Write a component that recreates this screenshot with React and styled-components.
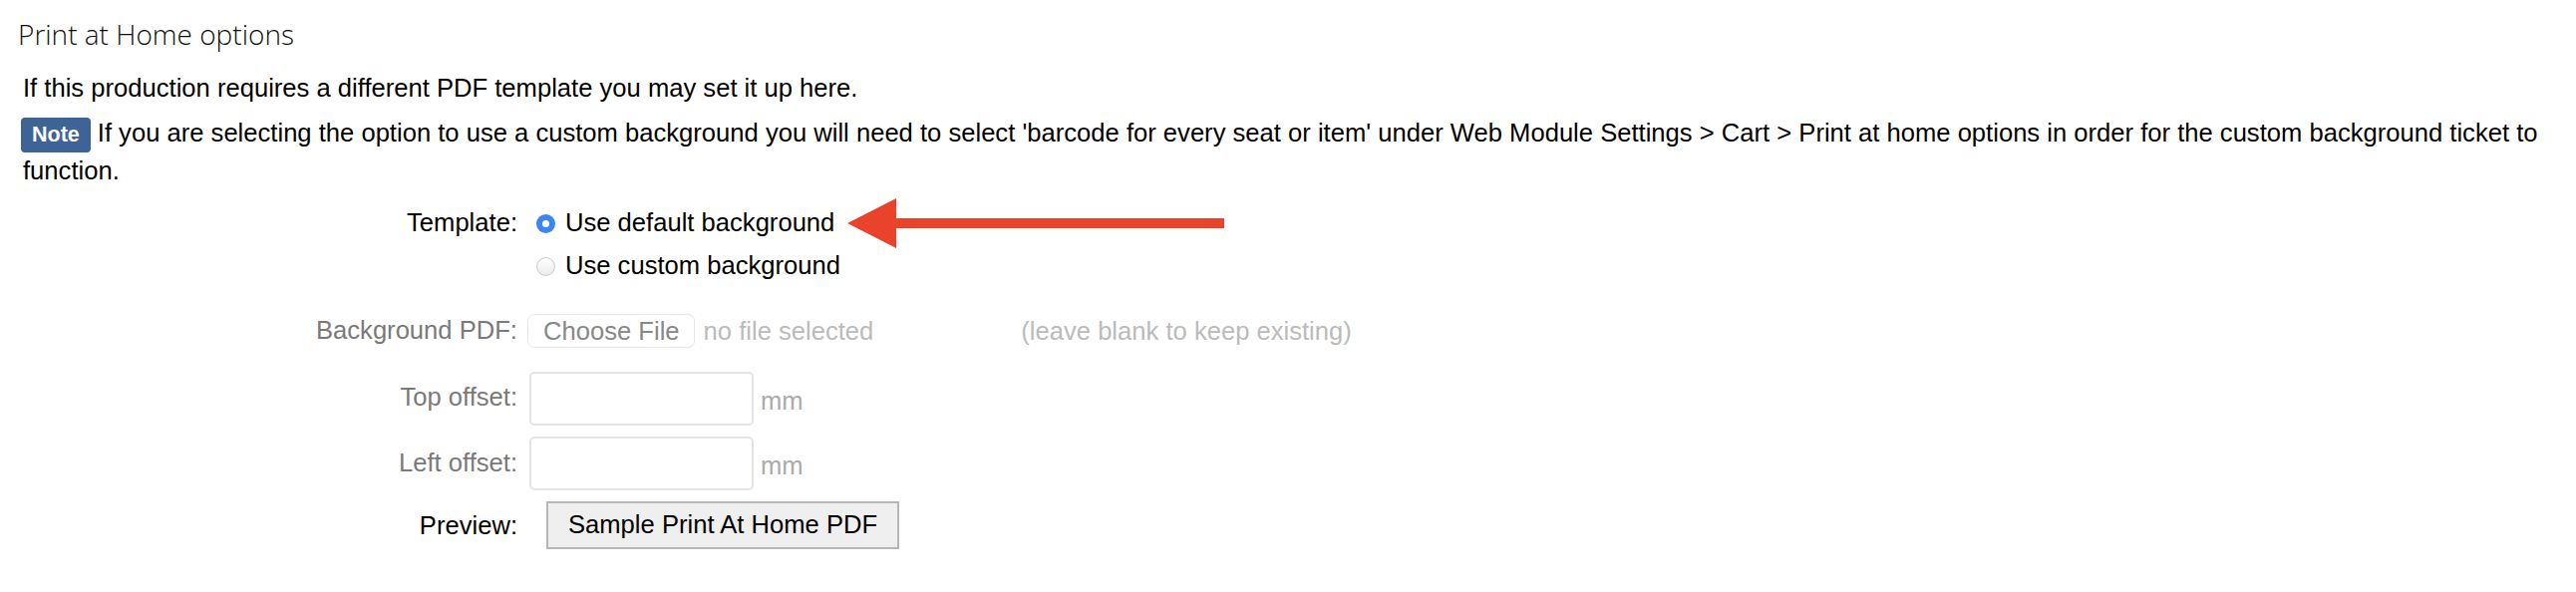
import React from "react";
import styled, { createGlobalStyle } from "styled-components";

const Global = createGlobalStyle`
  html, body { margin: 0; padding: 0; background: #fff; }
  body { font-family: "Liberation Sans", Arial, sans-serif; font-size: 25.6px; color: #000; }
`;

const Page = styled.div`
  position: relative;
  padding: 15px 0 0 17px;
  width: 2584px;
  height: 594px;
  box-sizing: border-box;
`;

const Heading = styled.h2`
  margin: 0;
  font-family: "Open Sans", sans-serif;
  font-weight: 300;
  font-size: 28px;
  line-height: 38px;
  color: #111;
  padding-left: 1px;
`;

const Para = styled.p`
  margin: ${(p) => p.$mt || 0}px 0 0 6px;
  line-height: 36px;
  padding-right: 24px;
`;

const NoteBadge = styled.span`
  display: inline-block;
  background: #3e6397;
  color: #fff;
  font-weight: 700;
  font-size: 21.5px;
  line-height: 25px;
  padding: 5px 11px;
  border-radius: 4px;
  margin-left: -2px;
  margin-right: 7px;
`;

const Form = styled.div`
  display: grid;
  grid-template-columns: 502px auto;
  column-gap: 12px;
  margin-top: 16px;
`;

const Label = styled.div`
  text-align: right;
  line-height: 36px;
  color: ${(p) => (p.$muted ? "#7a7a7a" : "#000")};
  align-self: ${(p) => p.$align || "start"};
  margin-top: ${(p) => p.$mt || 0}px;
`;

const Cell = styled.div`
  display: flex;
  align-items: ${(p) => p.$align || "center"};
  flex-direction: ${(p) => (p.$column ? "column" : "row")};
  gap: ${(p) => p.$gap || 0}px;
  margin-top: ${(p) => p.$mt || 0}px;
`;

const RadioLine = styled.label`
  display: flex;
  align-items: center;
  line-height: 36px;
  gap: 10px;
  padding-left: 7px;
`;

const Radio = styled.span`
  width: 19px;
  height: 19px;
  border-radius: 50%;
  box-sizing: border-box;
  position: relative;
  top: 1px;
  background: ${(p) => (p.$checked ? "#3b85f5" : "linear-gradient(#fff, #ececec)")};
  border: ${(p) => (p.$checked ? "none" : "1px solid #c9c9c9")};
  &::after {
    content: "";
    display: ${(p) => (p.$checked ? "block" : "none")};
    position: absolute;
    left: 6px;
    top: 6px;
    width: 7px;
    height: 7px;
    border-radius: 50%;
    background: #fff;
  }
`;

const FileButton = styled.span`
  display: inline-flex;
  align-items: center;
  height: 34px;
  box-sizing: border-box;
  padding: 0 14px 0 15px;
  border: 1px solid #e6e6e6;
  border-radius: 7px;
  color: #888;
  background: #fff;
  margin-left: -2px;
`;

const Faint = styled.span`
  color: ${(p) => p.$c || "#bbb"};
  margin-left: ${(p) => p.$ml || 0}px;
  padding-top: ${(p) => p.$pt || 0}px;
`;

const NumInput = styled.span`
  display: inline-block;
  width: 225px;
  height: 54px;
  box-sizing: border-box;
  border: 2px solid #e4e4e4;
  border-radius: 5px;
  background: #fff;
`;

const PreviewButton = styled.button`
  font-family: "Liberation Sans", Arial, sans-serif;
  font-size: 25.6px;
  color: #000;
  background: #efefef;
  border: 2px solid #b6b6b6;
  height: 48px;
  padding: 0 20px;
  margin-left: 17px;
  line-height: 1;
`;

const Arrow = styled.svg`
  position: absolute;
  left: 848px;
  top: 197px;
`;

export default function App() {
  return (
    <Page>
      <Global />
      <Heading>Print at Home options</Heading>
      <Para $mt={17}>If this production requires a different PDF template you may set it up here.</Para>
      <Para $mt={9}>
        <NoteBadge>Note</NoteBadge>
        If you are selecting the option to use a custom background you will need to select 'barcode for every seat or item' under Web Module Settings &gt; Cart &gt; Print at home options in order for the custom background ticket to function.
      </Para>
      <Form>
        <Label>Template:</Label>
        <Cell $column $align="flex-start" $gap={7}>
          <RadioLine>
            <Radio $checked />
            Use default background
          </RadioLine>
          <RadioLine>
            <Radio />
            Use custom background
          </RadioLine>
        </Cell>

        <Label $muted $mt={29}>Background PDF:</Label>
        <Cell $mt={31}>
          <FileButton>Choose File</FileButton>
          <Faint $ml={9}>no file selected</Faint>
          <Faint $ml={148}>(leave blank to keep existing)</Faint>
        </Cell>

        <Label $muted $align="center" $mt={20}>Top offset:</Label>
        <Cell $mt={24}>
          <NumInput />
          <Faint $c="#aaa" $ml={7} $pt={4}>mm</Faint>
        </Cell>

        <Label $muted $align="center" $mt={9}>Left offset:</Label>
        <Cell $mt={11}>
          <NumInput />
          <Faint $c="#aaa" $ml={7} $pt={4}>mm</Faint>
        </Cell>

        <Label $align="center" $mt={11}>Preview:</Label>
        <Cell $mt={11}>
          <PreviewButton>Sample Print At Home PDF</PreviewButton>
        </Cell>
      </Form>
      <Arrow width="384" height="56" viewBox="0 0 384 56">
        <polygon points="2,27 51,2 51,52" fill="#e9432c" />
        <rect x="50" y="22" width="330" height="10" fill="#e9432c" />
      </Arrow>
    </Page>
  );
}
